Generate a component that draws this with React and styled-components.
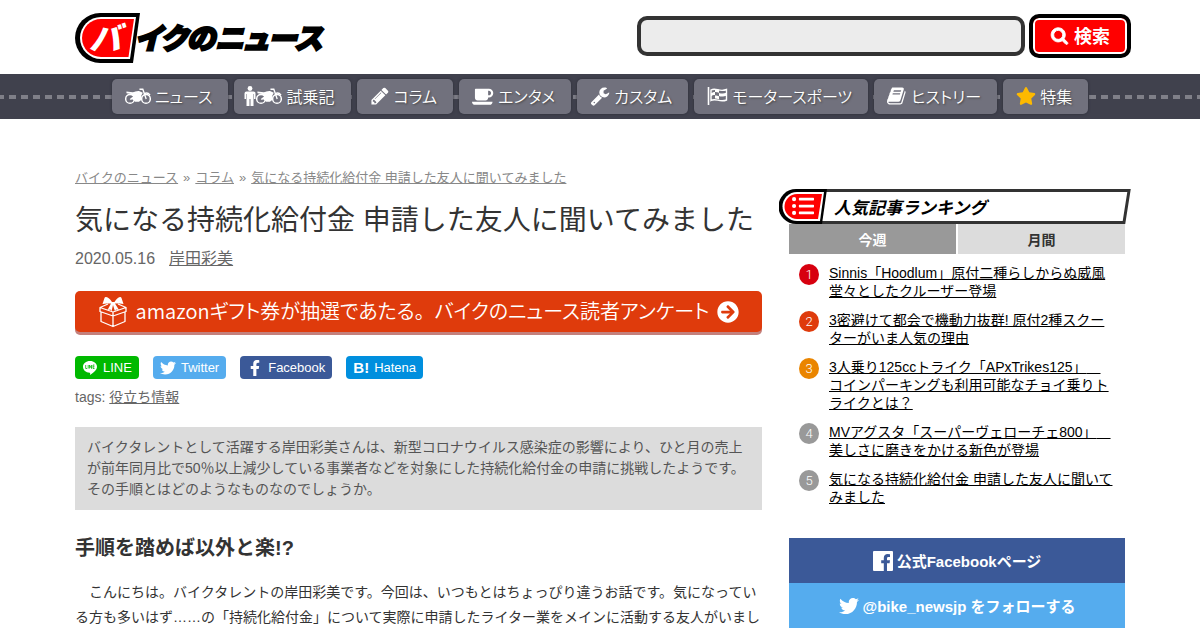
import React from 'react';
import styled, { createGlobalStyle } from 'styled-components';
import { FaStar, FaTwitter, FaFacebookF, FaArrowCircleRight, FaListUl } from 'react-icons/fa';

const GlobalStyle = createGlobalStyle`
  * {
    box-sizing: border-box;
  }

  body {
    margin: 0;
    background: #fff;
    color: #333;
    font-family: "Liberation Sans", "Noto Sans CJK JP", sans-serif;
    font-size: 14px;
    text-spacing-trim: space-all;
  }

  button,
  input {
    font-family: inherit;
  }
`;

// Header
const Header = styled.header`
  display: flex;
  align-items: center;
  justify-content: space-between;
  max-width: 1050px;
  height: 74px;
  margin: 0 auto;
  padding-top: 2px;
`;

const LogoLink = styled.a`
  display: block;
  height: 50px;
`;

const SearchForm = styled.form`
  display: flex;
  align-items: center;
  gap: 4px;
  margin: 0 -6px 4px 0;
`;

const SearchInput = styled.input`
  width: 388px;
  height: 40px;
  padding: 0 10px;
  border: 4px solid #333;
  border-radius: 10px;
  background: #ececec;
  font-size: 16px;
`;

const SearchButton = styled.button`
  display: flex;
  align-items: center;
  justify-content: center;
  gap: 5px;
  width: 102px;
  height: 44px;
  padding: 0 0 2px;
  border: 4px solid #000;
  border-radius: 10px;
  background: #f00;
  box-shadow: inset 0 0 0 2px #fff;
  color: #fff;
  font-size: 18px;
  font-weight: bold;

  svg {
    stroke: #fff;
    stroke-width: 90px;
  }
`;

// Global navigation, drawn as a road with a dashed centre line
const Nav = styled.nav`
  display: flex;
  justify-content: center;
  align-items: center;
  gap: 6px;
  height: 45px;
  background:
    repeating-linear-gradient(90deg, #7f7f88 0 4px, #40414d 4px 9px, #7f7f88 9px 12px) 0 21px / 100% 4px no-repeat,
    #40414d;
`;

const NavItem = styled.a`
  display: flex;
  align-items: center;
  gap: 4px;
  height: 35px;
  padding: 0 16px 1px 13px;
  border-radius: 5px;
  background: #71717d;
  box-shadow: 0 0 3px #2c2d38;
  color: #fff;
  font-family: "Noto Sans CJK JP", sans-serif;
  font-size: 16px;
  font-weight: 350;
  font-feature-settings: "palt";
  text-decoration: none;
  text-shadow: 1px 1px 2px #444;
  white-space: nowrap;

  svg {
    flex: none;
  }
`;

const IconPair = styled.span`
  display: flex;
  align-items: center;
  margin-left: -3px;
`;

// Page body
const Page = styled.div`
  display: grid;
  grid-template-columns: minmax(0, 1fr) 336px;
  gap: 27px;
  max-width: 1050px;
  margin: 0 auto;
`;

const Main = styled.main`
  padding-top: 50px;
`;

const Breadcrumb = styled.div`
  display: flex;
  gap: 5px;
  color: #888;
  font-size: 13px;
  line-height: 18px;

  a {
    color: #888;
  }
`;

const Title = styled.h1`
  margin: 13px 0 7px;
  font-size: 28px;
  font-weight: normal;
  line-height: 42px;
`;

const Meta = styled.div`
  display: flex;
  gap: 14px;
  color: #666;
  font-size: 16px;
  line-height: 20px;

  a {
    color: #666;
  }
`;

const Banner = styled.a`
  display: flex;
  align-items: center;
  justify-content: center;
  gap: 8px;
  height: 41px;
  margin: 22px 0 24px;
  border-radius: 5px;
  background: #df3b0c;
  box-shadow: 0 3px 0 #c4807c;
  color: #fff;
  font-family: "Noto Sans CJK JP", sans-serif;
  font-size: 20px;
  font-weight: 350;
  text-decoration: none;
  white-space: nowrap;
`;

const BannerText = styled.span`
  padding-bottom: 2px;
  font-feature-settings: "palt";
`;

const FullWidth = styled.span`
  font-feature-settings: normal;
`;

const ShareList = styled.div`
  display: flex;
  gap: 14px;
`;

const ShareButton = styled.a`
  display: flex;
  align-items: center;
  gap: 5px;
  height: 23px;
  padding: 0 7px;
  border-radius: 4px;
  background: ${(props) => props.$color};
  color: #fff;
  font-size: 13px;
  text-decoration: none;

  b {
    font-size: 15px;
  }
`;

const Tags = styled.div`
  margin: 8px 0 20px;
  color: #666;
  line-height: 20px;

  a {
    color: #666;
  }
`;

const Lead = styled.p`
  margin: 0;
  padding: 10px 12px;
  background: #dcdcdc;
  color: #555;
  line-height: 21px;
`;

const Heading = styled.h2`
  margin: 24px 0 18px;
  font-size: 20px;
  line-height: 28px;
`;

const Paragraph = styled.p`
  margin: 0;
  line-height: 25px;
`;

// Sidebar
const Sidebar = styled.aside`
  padding-top: 70px;
`;

const RankingTitle = styled.h2`
  position: relative;
  display: flex;
  align-items: center;
  gap: 7px;
  height: 35px;
  margin: 0 -4px 0 -10px;
  color: #000;
  font-size: 17px;
  font-style: italic;

  &::before {
    content: "";
    position: absolute;
    inset: 0 1px 0 30px;
    border: 3px solid #333;
    transform: skewX(-9deg);
  }

  span {
    position: relative;
  }
`;

const RankingBadge = styled.span`
  width: 48px;
  height: 35px;
`;

const BadgeIcon = styled(FaListUl)`
  position: absolute;
  top: 6px;
  left: 13px;
`;

const Tabs = styled.div`
  display: grid;
  grid-template-columns: 1fr 1fr;
  gap: 2px;
`;

const Tab = styled.button`
  height: 30px;
  padding: 0;
  border: 0;
  background: ${(props) => (props.$active ? '#999' : '#dcdcdc')};
  color: ${(props) => (props.$active ? '#fff' : '#333')};
  font-size: 14px;
  font-weight: bold;
`;

const RankingList = styled.ol`
  display: grid;
  gap: 11px;
  margin: 0 0 32px;
  padding: 10px 12px 0 10px;
  list-style: none;
`;

const RankingItem = styled.li`
  display: grid;
  grid-template-columns: 20px 1fr;
  gap: 10px;
  line-height: 18px;

  a {
    color: #000;
  }
`;

const Rank = styled.span`
  height: 21px;
  border-radius: 50%;
  background: ${(props) => props.$color};
  color: #fff;
  font-family: Roboto, sans-serif;
  font-size: 13px;
  font-weight: 300;
  line-height: 21px;
  text-align: center;
`;

const FollowLink = styled.a`
  display: flex;
  align-items: center;
  justify-content: center;
  gap: 4px;
  height: 45px;
  background: ${(props) => props.$color};
  color: #fff;
  font-size: 15px;
  font-weight: bold;
  text-decoration: none;
`;

// Icons
const Glyph = ({ d, size = 20, box = '0 0 1792 1792' }) => (
  <svg width={size} height={size} viewBox={box} fill="currentColor" aria-hidden="true">
    <path d={d} />
  </svg>
);

const paths = {
  search:
    'M1216 832q0-185-131.5-316.5t-316.5-131.5-316.5 131.5-131.5 316.5 131.5 316.5 316.5 131.5 316.5-131.5 131.5-316.5zm512 832q0 52-38 90t-90 38q-54 0-90-38l-343-342q-179 124-399 124-143 0-273.5-55.5t-225-150-150-225-55.5-273.5 55.5-273.5 150-225 225-150 273.5-55.5 273.5 55.5 225 150 150 225 55.5 273.5q0 220-124 399l343 343q37 37 37 90z',
  pencil:
    'M491 1536l91-91-235-235-91 91v107h128v128h107zm523-928q0-22-22-22-10 0-17 7l-542 542q-7 7-7 17 0 22 22 22 10 0 17-7l542-542q7-7 7-17zm-54-192l416 416-832 832h-416v-416zm683 96q0 53-37 90l-166 166-416-416 166-165q36-38 90-38 53 0 91 38l235 234q37 39 37 91z',
  coffee:
    'M1664 640q0-80-56-136t-136-56h-64v384h64q80 0 136-56t56-136zm-1664 768h1792q0 106-75 181t-181 75h-1280q-106 0-181-75t-75-181zm1856-768q0 159-112.5 271.5t-271.5 112.5h-64v32q0 92-66 158t-158 66h-704q-92 0-158-66t-66-158v-736q0-26 19-45t45-19h1152q159 0 271.5 112.5t112.5 271.5z',
  wrench:
    'M448 1472q0-26-19-45t-45-19-45 19-19 45 19 45 45 19 45-19 19-45zm644-420l-682 682q-37 37-90 37-52 0-91-37l-106-108q-38-36-38-90 0-53 38-91l681-681q39 98 114.5 173.5t173.5 114.5zm634-435q0 39-23 106-47 134-164.5 217.5t-258.5 83.5q-185 0-316.5-131.5t-131.5-316.5 131.5-316.5 316.5-131.5q58 0 121.5 16.5t107.5 46.5q16 11 16 28t-16 28l-293 169v224l193 107q5-3 79-48.5t135.5-81 70.5-35.5q15 0 23.5 10t8.5 25z',
  book:
    'M1639 478q40 57 18 129l-275 906q-19 64-76.5 107.5t-122.5 43.5h-923q-77 0-148.5-53.5t-99.5-131.5q-24-67-2-127 0-4 3-27t4-37q1-8-3-21.5t-3-19.5q2-11 8-21t16.5-23.5 16.5-23.5q23-38 45-91.5t30-91.5q3-10 .5-30t-.5-28q3-11 17-28t17-23q21-36 42-92t25-90q1-9-2.5-32t.5-28q4-13 22-30.5t22-22.5q19-26 42.5-84.5t27.5-96.5q1-8-3-25.5t-2-26.5q2-8 9-18t18-23 17-21q8-12 16.5-30.5t15-35 16-36 19.5-32 26.5-23.5 36-11.5 47.5 5.5l-1 3q38-9 51-9h761q74 0 114 56t18 130l-274 906q-36 119-71.5 153.5t-128.5 34.5h-869q-27 0-38 15-11 16-1 43 24 70 144 70h923q29 0 56-15.5t35-41.5l300-987q7-22 5-57 38 15 59 43zm-1064 2q-4 13 2 22.5t20 9.5h608q13 0 25.5-9.5t16.5-22.5l21-64q4-13-2-22.5t-20-9.5h-608q-13 0-25.5 9.5t-16.5 22.5zm-83 256q-4 13 2 22.5t20 9.5h608q13 0 25.5-9.5t16.5-22.5l21-64q4-13-2-22.5t-20-9.5h-608q-13 0-25.5 9.5t-16.5 22.5z',
};

const BikeIcon = () => (
  <svg width="26" height="17" viewBox="0 0 27 17" fill="none" stroke="#fff" aria-hidden="true">
    <circle cx="5.2" cy="11" r="4.5" strokeWidth="1.5" />
    <circle cx="21.8" cy="11" r="4.5" strokeWidth="1.5" />
    <path d="M15 1h3.500l3.500 10M20 5.500c2-1 4.500-.5 6 1.500" strokeWidth="1.400" />
    <path d="M1.500 3.200l6.500.8c2-.3 4-1.500 6.500-1.300l4 1.800-1.500 3 .5 4-3 2.500h-4L8 11.500l-3 .3.500-1.300 3-2-2-2.500-5-1z" fill="#fff" stroke="none" />
  </svg>
);

const PersonIcon = () => (
  <svg width="12" height="20" viewBox="0 0 12 20" fill="#fff" aria-hidden="true">
    <circle cx="6" cy="2.500" r="2.400" />
    <path d="M2.500 5.500h7a2 2 0 0 1 2 2V13H10V8h-.5v12h-3v-7h-1v7h-3V8H2v5H.5V7.500a2 2 0 0 1 2-2z" />
  </svg>
);

const FlagIcon = () => (
  <svg width="21" height="18" viewBox="0 0 20 18" fill="none" stroke="#fff" aria-hidden="true">
    <path d="M1 0v18" strokeWidth="1.600" />
    <path d="M3.500 3c5-3 8 2.500 15.500-.5v10.500c-7 3-10.500-2.500-15.500.5z" strokeWidth="1.400" />
    <path d="M7.500 2c2-.3 3 .5 4 .8v3c-1.500-.5-2.500-1-4-.8zM11.500 6c1.500.5 3 .6 4 .5v3c-1.500.2-3 0-4-.5zM3.500 6.300c1.500-.9 3-1.300 4-1.300v3c-1.500 0-3 .5-4 1.300zM7.500 8.500c1.500 0 3 .5 4 .8v3c-1.500-.6-3-1-4-.9zM15.500 6.500l3.500-.8v3l-3.500.8z" fill="#fff" stroke="none" />
  </svg>
);

const GiftIcon = () => (
  <svg width="30" height="32" viewBox="0 0 30 32" fill="none" stroke="#fff" strokeWidth="1.300" strokeLinejoin="round" aria-hidden="true">
    <path d="M10 8L2 11.500v4l13 4.500 13-4.500v-4L20 8M2 11.500l13 4.500 13-4.500M15 16v14.500M3 16v9.500l12 5 12-5V16" />
    <path d="M14 6C11 1 7 0 6.500 2S5 6 4.500 8c3-1 6-.5 8.500-.5L9.500 14l3-.5 1 2L15 9l2 6.500 1-2 3 .5-4-6.500c3 0 6-.5 8.500.5-.5-2-1.500-4-2-6s-4-1-7 4z" fill="#fff" stroke="none" />
  </svg>
);

const LineIcon = () => (
  <svg width="16" height="16" viewBox="0 0 16 16" aria-hidden="true">
    <path d="M8 1c4 0 7 2.500 7 5.800 0 3-3 5.500-7 8.200.3-1.300.3-2-.3-2.200C3.800 12.500 1 10.200 1 6.800 1 3.500 4 1 8 1z" fill="#fff" />
    <path d="M3.700 5v3.500h1.500M6.200 5v3.500M7.500 8.500V5l2 3.500V5M12.500 5H11v3.500h1.500M11 6.800h1.500" fill="none" stroke="#00b900" strokeWidth=".8" />
  </svg>
);

const FacebookBox = () => (
  <svg width="20" height="20" viewBox="0 0 20 20" aria-hidden="true">
    <path d="M1 0h18a1 1 0 0 1 1 1v18a1 1 0 0 1-1 1h-5v-7.700h2.600l.4-3h-3V7.400c0-.9.300-1.500 1.500-1.500H17V3.200L14.700 3c-2.300 0-3.900 1.400-3.900 4v2.300H8.200v3h2.600V20H1a1 1 0 0 1-1-1V1a1 1 0 0 1 1-1z" fill="#fff" />
  </svg>
);

const Logo = () => (
  <svg width="250" height="50" viewBox="0 0 250 50" role="img" aria-label="バイクのニュース">
    <path d="M25 0h40l-7 50H25a25 25 0 0 1 0-50z" fill="#000" />
    <path d="M26 4h35l-6 42H26a21 21 0 0 1 0-42z" fill="#fff" />
    <path d="M26 6h33l-5.500 38H26a19 19 0 0 1 0-38z" fill="#f00" />
    <g fontFamily="Noto Sans CJK JP" fontWeight="900" fontStyle="italic">
      <text x="14" y="37" fontSize="32" fill="#fff">バ</text>
      <text x="60" y="36" fontSize="29" fill="#000" stroke="#000" strokeWidth="2" style={{ fontFeatureSettings: '"palt"' }}>
        イクのニュース
      </text>
    </g>
  </svg>
);

const navItems = [
  { label: 'ニュース', icon: <BikeIcon /> },
  { label: '試乗記', icon: <IconPair><PersonIcon /><BikeIcon /></IconPair> },
  { label: 'コラム', icon: <Glyph d={paths.pencil} /> },
  { label: 'エンタメ', icon: <Glyph d={paths.coffee} box="0 0 1920 1792" size={22} /> },
  { label: 'カスタム', icon: <Glyph d={paths.wrench} /> },
  { label: 'モータースポーツ', icon: <FlagIcon /> },
  { label: 'ヒストリー', icon: <Glyph d={paths.book} /> },
  { label: '特集', icon: <FaStar size={20} color="#fdb900" /> },
];

const ranking = [
  { color: '#d7000f', title: 'Sinnis「Hoodlum」原付二種らしからぬ威風堂々としたクルーザー登場' },
  { color: '#df3b0c', title: '3密避けて都会で機動力抜群! 原付2種スクーターがいま人気の理由' },
  { color: '#ea8500', title: '3人乗り125ccトライク「APxTrikes125」　コインパーキングも利用可能なチョイ乗りトライクとは？' },
  { color: '#999', title: 'MVアグスタ「スーパーヴェローチェ800」　美しさに磨きをかける新色が登場' },
  { color: '#999', title: '気になる持続化給付金 申請した友人に聞いてみました' },
];

const bodyText =
  '　こんにちは。バイクタレントの岸田彩美です。今回は、いつもとはちょっぴり違うお話です。気になっている方も多いはず……の「持続化給付金」について実際に申請したライター業をメインに活動する友人がいまし';

export default function App() {
  return (
    <>
      <GlobalStyle />
      <Header>
        <LogoLink href="#"><Logo /></LogoLink>
        <SearchForm>
          <SearchInput type="text" aria-label="検索キーワード" />
          <SearchButton type="button">
            <Glyph d={paths.search} size={19} box="-50 -50 1892 1892" />検索
          </SearchButton>
        </SearchForm>
      </Header>

      <Nav>
        {navItems.map((item) => (
          <NavItem href="#" key={item.label}>
            {item.icon}
            {item.label}
          </NavItem>
        ))}
      </Nav>

      <Page>
        <Main>
          <Breadcrumb>
            <a href="#">バイクのニュース</a>
            <span>»</span>
            <a href="#">コラム</a>
            <span>»</span>
            <a href="#">気になる持続化給付金 申請した友人に聞いてみました</a>
          </Breadcrumb>
          <Title>気になる持続化給付金 申請した友人に聞いてみました</Title>
          <Meta>
            <span>2020.05.16</span>
            <a href="#">岸田彩美</a>
          </Meta>

          <Banner href="#">
            <GiftIcon />
            <BannerText>
              amazonギフト券が抽選であたる<FullWidth>。</FullWidth>バイクのニュース読者アンケート
            </BannerText>
            <FaArrowCircleRight size={22} />
          </Banner>

          <ShareList>
            <ShareButton href="#" $color="#00b900"><LineIcon />LINE</ShareButton>
            <ShareButton href="#" $color="#55acee"><FaTwitter size={16} />Twitter</ShareButton>
            <ShareButton href="#" $color="#3b5998"><FaFacebookF size={16} />Facebook</ShareButton>
            <ShareButton href="#" $color="#008fde"><b>B!</b>Hatena</ShareButton>
          </ShareList>

          <Tags>tags: <a href="#">役立ち情報</a></Tags>

          <Lead>
            バイクタレントとして活躍する岸田彩美さんは、新型コロナウイルス感染症の影響により、ひと月の売上が前年同月比で50％以上減少している事業者などを対象にした持続化給付金の申請に挑戦したようです。その手順とはどのようなものなのでしょうか。
          </Lead>

          <Heading>手順を踏めば以外と楽!?</Heading>
          <Paragraph>{bodyText}</Paragraph>
        </Main>

        <Sidebar>
          <RankingTitle>
            <RankingBadge>
              <svg width="48" height="35" viewBox="0 0 48 35" aria-hidden="true">
                <path d="M17 0h31l-5 35H17a17 17 0 0 1 0-35z" fill="#000" />
                <path d="M18 3h27l-4 29H18a14 14 0 0 1 0-29z" fill="#fff" />
                <path d="M18 5h25l-4 25H18a12 12 0 0 1 0-25z" fill="#f00" />
              </svg>
              <BadgeIcon size={22} color="#fff" />
            </RankingBadge>
            <span>人気記事ランキング</span>
          </RankingTitle>
          <Tabs>
            <Tab type="button" $active>今週</Tab>
            <Tab type="button">月間</Tab>
          </Tabs>
          <RankingList>
            {ranking.map((item, i) => (
              <RankingItem key={item.title}>
                <Rank $color={item.color}>{i + 1}</Rank>
                <a href="#">{item.title}</a>
              </RankingItem>
            ))}
          </RankingList>
          <FollowLink href="#" $color="#3b5998"><FacebookBox />公式Facebookページ</FollowLink>
          <FollowLink href="#" $color="#55acee"><FaTwitter size={20} />@bike_newsjp をフォローする</FollowLink>
        </Sidebar>
      </Page>
    </>
  );
}
